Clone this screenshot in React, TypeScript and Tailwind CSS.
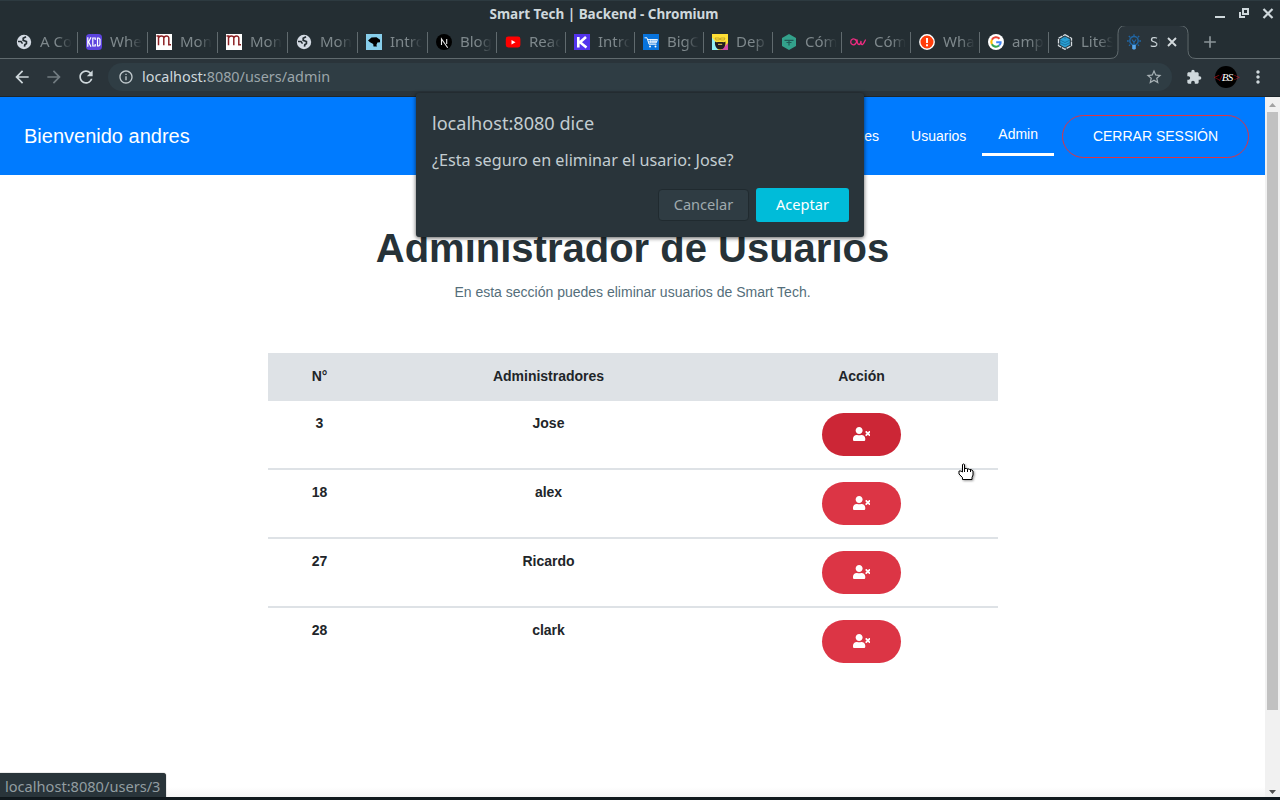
import type { ReactNode } from 'react';
import { FaUserTimes } from 'react-icons/fa';
import { MdArrowBack, MdArrowForward, MdRefresh, MdInfoOutline, MdStarBorder, MdExtension, MdMoreVert, MdAdd } from 'react-icons/md';

const Globe = () => (
  <svg viewBox="0 0 16 16" className="size-4 shrink-0">
    <circle cx="8" cy="8" r="7.2" fill="#d3dae3" />
    <path d="M10 2.800 7.200 4.300v2l3.200 1.200v2l-1.600 1.200-.3 2" fill="none" stroke="#242e33" strokeWidth="1.700" />
    <path d="M2 7.600h3l1.500 2" fill="none" stroke="#242e33" strokeWidth="1.500" />
  </svg>
);

const Kcd = () => (
  <svg viewBox="0 0 16 16" className="size-4 shrink-0">
    <rect width="16" height="16" rx="3.5" fill="#5c43dd" />
    <path d="M1.800 3.200v9.600M5 3.200 2.600 8 5 12.800M9.200 6V4H6.800v8h2.400v-2M11.500 4v8h1.300l1.200-1.300V5.300L12.800 4z" fill="none" stroke="#fff" strokeWidth="1.200" />
  </svg>
);

const RedM = () => (
  <svg viewBox="0 0 16 16" className="size-4 shrink-0">
    <rect width="16" height="16" fill="#fff" />
    <path d="M.5 2h2v9.300M2.500 4.200C3 1.400 7.800 1.200 7.800 4v7.300M7.800 4.200c.5-2.800 5-3 5 0v6.500H15" fill="none" stroke="#8e2326" strokeWidth="1.500" />
  </svg>
);

const Bird = () => (
  <svg viewBox="0 0 16 16" className="size-4 shrink-0">
    <rect width="16" height="16" fill="#87ceeb" />
    <path d="M2 6.500 5.500 3.500l5-.2 3.500 2.500v2.500l-2.600.2-1 2.500.6 1.500H7.500l-.3-2.400L4 8.200z" fill="#000" />
  </svg>
);

const NextLogo = () => (
  <svg viewBox="0 0 16 16" className="size-4 shrink-0">
    <circle cx="8" cy="8" r="8" fill="#000" />
    <path d="M5.500 11V5l6.200 8.700M10.700 5v5" fill="none" stroke="#e8e8e8" strokeWidth="1.100" />
  </svg>
);

const YouTube = () => (
  <svg viewBox="0 0 16 16" className="size-4 shrink-0">
    <rect x=".8" y="2.600" width="14.600" height="10.800" rx="2.400" fill="#f00" />
    <path d="m6.500 6 4 2.200-4 2.200z" fill="#fff" />
  </svg>
);

const Kibo = () => (
  <svg viewBox="0 0 16 16" className="size-4 shrink-0">
    <rect width="16" height="16" fill="#5333ed" />
    <path d="M4.300 3v10.500M12 3 6 8.300l6.500 5.200" fill="none" stroke="#fff" strokeWidth="2.600" />
  </svg>
);

const Cart = () => (
  <svg viewBox="0 0 16 16" className="size-4 shrink-0">
    <rect width="16" height="16" fill="#0873dc" />
    <path d="M1.500 3.800h2.500l2 6.500h7.500M4.500 5.500h10l-1.300 3.400H5.800M5 7.200h9M7.800 5.500v3.400M10 5.500v3.400M12 5.500v3.400" fill="none" stroke="#fff" strokeWidth=".9" />
    <circle cx="7" cy="12.500" r="1" fill="#fff" />
    <circle cx="12.500" cy="12.500" r="1" fill="#fff" />
  </svg>
);

const Beard = () => (
  <svg viewBox="0 0 16 16" className="size-4 shrink-0">
    <rect width="16" height="16" fill="#ffdf35" />
    <path d="M0 3.500 3.500 8 6 16H0z" fill="#92f0f4" />
    <path d="M16 9v7H9z" fill="#d44ca8" />
    <path d="M3 7.500c1 1.300 2.400.5 5.200.5s4.200.8 5.200-.5c.6 4.500-1.700 8-5.200 8s-5.800-3.500-5.200-8z" fill="#211c20" />
    <path d="M3 4h4.300v2H4zM8.600 4H13l-.8 2H8.600z" fill="none" stroke="#a78a20" strokeWidth=".6" />
    <path d="M6 10.300h4.200" stroke="#f3d35c" strokeWidth="1" />
  </svg>
);

const Hex = () => (
  <svg viewBox="0 0 16 16" className="size-4 shrink-0">
    <path d="m8 0 7 4v8l-7 4-7-4V4z" fill="#33a18b" />
    <path d="M3.500 6.300h9M5.500 8.500h5M8 6v5.500" fill="none" stroke="#1f5a55" strokeWidth="1.200" />
  </svg>
);

const PinkCw = () => (
  <svg viewBox="0 0 16 16" className="size-4 shrink-0">
    <path d="M5.800 6.300C4 3.800.7 5 .7 8c0 2.900 3.400 3.700 5 1.500C7 7.800 6.600 5.200 4.800 5.500M7.200 5.500c-.2 2.500.3 5 1.900 5 1.400 0 1.600-2 1.900-3.500-.1 2.200.2 3.800 1.500 3.500 1.200-.3 1.800-2.800 3.200-5" fill="none" stroke="#ee2c80" strokeWidth="1.300" />
  </svg>
);

const Alert = () => (
  <svg viewBox="0 0 16 16" className="size-4 shrink-0">
    <circle cx="8" cy="8" r="7.200" fill="#ff3d0a" stroke="#fff" strokeWidth="1.400" />
    <path d="M8 4v5M8 10.300v1.900" stroke="#fff" strokeWidth="1.900" />
  </svg>
);

const Google = () => (
  <svg viewBox="0 0 16 16" className="size-4 shrink-0">
    <circle cx="8" cy="8" r="8" fill="#fff" />
    <g fill="none" strokeWidth="2.100">
      <path d="M11.500 4.700A4.700 4.700 0 0 0 3.900 5.800" stroke="#ea4335" />
      <path d="M3.900 5.800a4.700 4.700 0 0 0 0 4.500" stroke="#fbbc05" />
      <path d="M3.900 10.300a4.700 4.700 0 0 0 7.200 1.200" stroke="#34a853" />
      <path d="M11.100 11.500c1.100-.9 1.600-2.200 1.500-3.200H8.200" stroke="#4285f4" />
    </g>
  </svg>
);

const LiteSpeed = () => (
  <svg viewBox="0 0 16 16" className="size-4 shrink-0">
    <path d="m8 .7 6.500 3.600v7.400L8 15.300l-6.500-3.600V4.300z" fill="#27353d" stroke="#d8dee2" strokeWidth="1.300" strokeDasharray="4.500 .8" />
    <path d="m8 2.500 4.800 2.700v5.600L8 13.500l-4.800-2.700V5.200z" fill="#2a9fd4" />
    <path d="m3 6 5 2.500L13 6M3 8.500 8 11l5-2.500M8 3v2" fill="none" stroke="#176c97" strokeWidth=".8" />
  </svg>
);

const Bulb = () => (
  <svg viewBox="0 0 16 16" className="size-4 shrink-0">
    <g fill="none" stroke="#2065a3">
      <circle cx="8" cy="6.800" r="4.200" strokeWidth="1.500" />
      <path d="M8 .3v1.600M2.800 2l1.300 1.300M13.200 2l-1.300 1.300M1 7h1.800M13.200 7H15M3 11.800l1.200-1.200M13 11.800l-1.200-1.200" strokeWidth="1.300" />
      <path d="m6 5.500 2 3 2-3M8 8v3" strokeWidth="1.200" />
    </g>
    <path d="M6.200 11h3.600v3.500l-.8 1H7l-.8-1z" fill="#55a6ec" />
  </svg>
);

const wideTabs: [string, ReactNode][] = [
  ['A Co', <Globe />],
  ['Whe', <Kcd />],
  ['Mon', <RedM />],
  ['Mon', <RedM />],
  ['Mon', <Globe />],
  ['Intro', <Bird />],
];

const narrowTabs: [string, ReactNode][] = [
  ['Blog', <NextLogo />],
  ['Reac', <YouTube />],
  ['Intro', <Kibo />],
  ['BigC', <Cart />],
  ['Dep', <Beard />],
  ['Cóm', <Hex />],
  ['Cóm', <PinkCw />],
  ['Wha', <Alert />],
  ['amp', <Google />],
  ['LiteS', <LiteSpeed />],
];

const users = [
  { id: 3, name: 'Jose' },
  { id: 18, name: 'alex' },
  { id: 27, name: 'Ricardo' },
  { id: 28, name: 'clark' },
];

function TabBody({ title, icon }: { title: string; icon: ReactNode }) {
  return (
    <>
      {icon}
      <span className="-mt-1 ml-2 w-8 overflow-hidden whitespace-nowrap text-[15px] leading-[22px] text-[#7e888c] [mask-image:linear-gradient(to_right,black_55%,transparent)]">
        {title}
      </span>
    </>
  );
}

function BrowserChrome() {
  return (
    <header className="h-[97px] bg-[#242e33] font-['Noto_Sans',sans-serif]">
      <div className="flex h-[26px] items-center border-t border-[#2d3a40]">
        <div className="w-[1208px] text-center text-[13.500px] font-bold leading-[26px] text-[#cfd8dc]">
          Smart Tech | Backend - Chromium
        </div>
        <svg viewBox="0 0 72 26" className="h-[26px] w-[72px]" fill="none" stroke="#cfd8dc">
          <path d="M7 16h10" strokeWidth="2" />
          <path d="M35 8h5v5h-5zM32 11v5h5" strokeWidth="2" />
          <path d="m55.500 8 9 9M64.500 8l-9 9" strokeWidth="2.200" />
        </svg>
      </div>
      <div className="flex h-[33px] items-end">
        <div className="flex h-[33px] w-[1110px] items-start border-b border-[#606a6e] pl-2 pt-[6px]">
          {wideTabs.map(([title, icon], i) => (
            <div key={i} className="flex h-[21px] w-[70px] shrink-0 items-start border-r border-[#606a6e] pl-2 pt-[2px]">
              <TabBody title={title} icon={icon} />
            </div>
          ))}
          {narrowTabs.map(([title, icon], i) => (
            <div
              key={i}
              className="flex h-[21px] w-[69px] shrink-0 items-start border-r border-[#606a6e] pl-2 pt-[2px] last:border-transparent"
            >
              <TabBody title={title} icon={icon} />
            </div>
          ))}
        </div>
        <div className="relative flex h-[33px] w-[86px] shrink-0 items-start pl-4 pt-[8px]">
          <svg viewBox="0 0 86 34" className="absolute left-0 top-0 h-[34px] w-[86px]">
            <path d="M0 32.500q8 0 8-8V7.500Q8 -.5 16 -.5H69Q77 -.5 77 7.500V24.500q0 8 9 8V34H0z" fill="#2a343a" />
            <path d="M0 32.500q8 0 8-8V7.500q0-8 8-8H69q9 0 9 8V24.500q0 8 8 8" fill="none" stroke="#606a6e" />
          </svg>
          <div className="relative flex items-start">
            <Bulb />
            <span className="-mt-1 ml-2 w-[10px] overflow-hidden whitespace-nowrap text-[15px] leading-[22px] text-[#cfd8dc] [mask-image:linear-gradient(to_right,black_60%,transparent)]">
              Sm
            </span>
            <svg viewBox="0 0 10 10" className="ml-[7px] mt-[3px] size-[10px]">
              <path d="m1 1 8 8M9 1 1 9" stroke="#d3dadd" strokeWidth="1.900" />
            </svg>
          </div>
        </div>
        <div className="flex h-[33px] flex-1 items-center border-b border-[#606a6e] pl-1">
          <MdAdd className="size-[20px] text-[#8b9599]" />
        </div>
      </div>
      <div className="flex h-[38px] items-center border-b border-[#1d262b] bg-[#2a343a] pb-px pl-3 text-[#cfd8dc]">
        <MdArrowBack className="size-5" />
        <MdArrowForward className="ml-3 size-5 text-[#717b80]" />
        <MdRefresh className="ml-3 size-5" />
        <div className="ml-3 flex h-7 w-[1064px] items-center rounded-full bg-[#2f3d44] pl-2.5 pr-[9px] text-[14.400px]">
          <MdInfoOutline className="size-4 text-[#c0c9cd]" />
          <span className="ml-2 flex-1 text-[#9ca6aa]">
            <span className="text-[#cfd8dc]">localhost:</span>8080/users/admin
          </span>
          <MdStarBorder className="size-[18px] text-[#a8b2b6]" />
        </div>
        <MdExtension className="ml-3.5 size-4" />
        <div className="ml-[13px] flex size-[22px] items-center justify-center rounded-full bg-black font-['Liberation_Serif',serif] text-[11px] italic tracking-[-0.6px] text-white">
          <span className="text-[#c3121f]">&lt;/</span>BS<span className="text-[#c3121f]">&gt;</span>
        </div>
        <MdMoreVert className="ml-[11px] size-5" />
      </div>
    </header>
  );
}

function ConfirmDialog() {
  return (
    <div className="absolute left-[416px] top-[93px] h-[144px] w-[448px] rounded-[3px] bg-[#29343a] px-4 pt-[17px] font-['Noto_Sans',sans-serif] text-[#c3cdd1] shadow-[0_1px_4px_rgba(0,0,0,0.65)]">
      <div className="text-[18.100px] leading-[26px]">localhost:8080 dice</div>
      <div className="mt-3 text-[16.180px] leading-[24px]">¿Esta seguro en eliminar el usario: Jose?</div>
      <div className="mt-4 flex items-center justify-end gap-[7px] pr-[-1px] text-[14.600px]">
        <button className="h-8 w-[91px] rounded-[4px] border border-[#202a2f] bg-[#2f3c43] text-[#9faaae]">Cancelar</button>
        <button className="-mr-px h-[34px] w-[93px] rounded-[3px] bg-[#00bcd9] text-white">Aceptar</button>
      </div>
    </div>
  );
}

export default function App() {
  return (
    <div className="relative h-[800px] w-[1280px] overflow-hidden bg-[#11191e]">
      <BrowserChrome />
      <div className="flex h-[700px] bg-white font-['Liberation_Sans',Arial,sans-serif] text-[14px] text-[#212529]">
        <div className="flex w-[1265px] flex-col bg-[linear-gradient(to_bottom,transparent_690px,#f5f5f5_700px)]">
          <nav className="flex h-[78px] shrink-0 items-center bg-[#007bff] pl-6 pr-4 text-white">
            <span className="flex-1 text-[20px]">Bienvenido andres</span>
            <a className="px-4">es</a>
            <a className="px-4">Usuarios</a>
            <a className="flex h-[40px] items-center border-b-[3px] border-white px-4">Admin</a>
            <button className="ml-2 h-[43px] w-[187px] rounded-full border border-[#dc3545]">CERRAR SESSIÓN</button>
          </nav>
          <main className="flex flex-col items-center">
            <h1 className="mt-[49px] text-[40px] font-bold leading-[48px] text-[#263238]">Administrador de Usuarios</h1>
            <p className="mt-[10px] leading-[21px] text-[#546e7a]">En esta sección puedes eliminar usuarios de Smart Tech.</p>
            <table className="ml-px mt-[50px] w-[730px] table-fixed border-separate border-spacing-0 text-center font-bold">
              <colgroup>
                <col className="w-[103px]" />
                <col className="w-[355px]" />
                <col className="w-[272px]" />
              </colgroup>
              <thead>
                <tr className="h-[48px] bg-[#dee2e6]">
                  <th className="pb-[2px]">N°</th>
                  <th className="pb-[2px]">Administradores</th>
                  <th className="pb-[2px] pr-px">Acción</th>
                </tr>
              </thead>
              <tbody>
                {users.map((user, i) => (
                  <tr key={user.id} className="h-[69px] align-top *:border-b-2 *:border-[#dee2e6] *:pt-3 last:*:border-transparent">
                    <td>{user.id}</td>
                    <td>{user.name}</td>
                    <td className="pr-px">
                      <button
                        className={`inline-flex h-[43px] w-[79px] items-center justify-center rounded-[22px] pb-px text-white ${i === 0 ? 'bg-[#cc2636]' : 'bg-[#dc3545]'}`}
                      >
                        <FaUserTimes className="h-[14px] w-[17.500px]" />
                      </button>
                    </td>
                  </tr>
                ))}
              </tbody>
            </table>
          </main>
        </div>
        <div className="flex w-[15px] flex-col items-center bg-[#f1f1f1]">
          <svg viewBox="0 0 15 15" className="size-[15px]">
            <path d="M4 10h7L7.500 6z" fill="#a3a3a3" />
          </svg>
          <div className="h-[598px] w-[11px] bg-[#c1c1c1]" />
          <svg viewBox="0 0 15 15" className="mt-auto size-[15px]">
            <path d="M4 8h7l-3.500 4z" fill="#505050" />
          </svg>
        </div>
      </div>
      <ConfirmDialog />
      <svg viewBox="0 0 17 18" className="absolute left-[958px] top-[463px] h-[18px] w-[17px] drop-shadow-[1px_1px_1px_rgba(0,0,0,0.4)]">
        <path
          d="M4.500 1.500q1-1 2 0V5.500h2l.5.500h2l.5.500h1.500l2 1.500V12l-1 2.500v2H4.500V14.500L1 11V8h2l1.500 1z"
          fill="#fff"
          stroke="#000"
        />
        <path d="M6.500 5v4M9.500 6v3M12.500 7v2" stroke="#000" />
      </svg>
      <div className="absolute left-0 top-[773px] h-[24px] w-[166px] rounded-tr-[3px] bg-[#29343a] pl-[5px] font-['Noto_Sans',sans-serif] text-[14.600px] leading-[27px] text-[#929da1] shadow-[0_0_1px_rgba(0,0,0,0.8)]">
        localhost:8080/users/3
      </div>
    </div>
  );
}
